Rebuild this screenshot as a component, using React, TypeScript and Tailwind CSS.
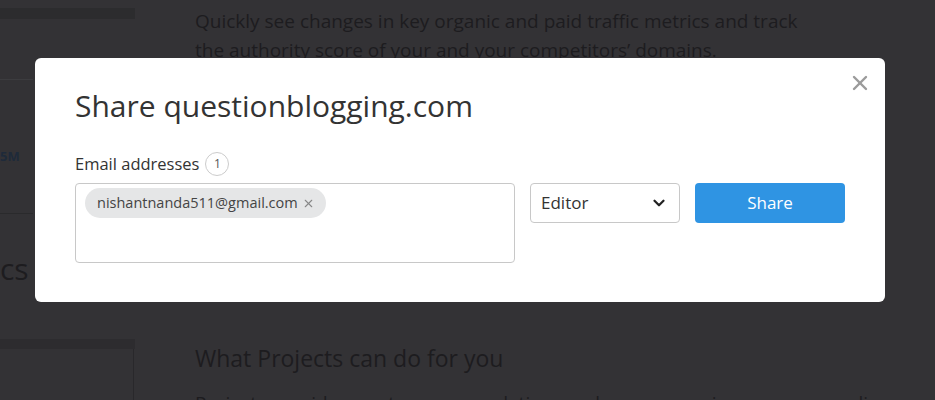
import { X, ChevronDown } from 'lucide-react'

const font = { fontFamily: '"Open Sans", "Noto Sans", sans-serif' }

function BackgroundPage() {
  return (
    <div className="flex h-full w-full text-[#1d1c1f]">
      <aside className="flex w-[135px] shrink-0 flex-col">
        <div className="mt-[8px] h-[13px] w-[135px] bg-[#2c2c2e]" />
        <div className="mt-[60px] h-[1px] w-[33px] bg-[#3c3c3f]" />
        <div className="flex border-r border-[#2b2b2d]">
          <div className="flex w-[33px] flex-col">
            <span className="mt-[70px] text-[13px] font-bold leading-none text-[#1e2a3a]">5M</span>
            <div className="mt-[50px] h-[1px] w-[33px] bg-[#2a2a2c]" />
            <span className="mt-[40px] text-[30px] font-medium leading-none">cs</span>
          </div>
        </div>
        <div className="mt-[55px] h-[12px] w-[135px] bg-[#2d2c2f]" />
        <div className="ml-[133px] h-[60px] w-[1px] bg-[#29282b]" />
      </aside>
      <main className="flex flex-col pl-[60px]">
        <p className="mt-[7px] w-[620px] text-[19px] leading-[29px]">
          Quickly see changes in key organic and paid traffic metrics and track the authority
          score of your and your competitors’ domains.
        </p>
        <h2 className="mt-[276px] text-[23px] font-medium">What Projects can do for you</h2>
        <p className="mt-[13px] text-[19px] leading-[29px]">
          Projects provide smart recommendations on how you can improve your online
        </p>
      </main>
    </div>
  )
}

function ShareModal() {
  return (
    <div className="absolute left-[35px] top-[58px] h-[244px] w-[850px] rounded-[6px] bg-white px-[40px] pt-[26px]">
      <button className="absolute right-[13px] top-[13px] text-[#9b9b9b]">
        <X size={24} strokeWidth={2.4} />
      </button>
      <h1 className="text-[30px] leading-[44px] text-[#333]">Share questionblogging.com</h1>
      <div className="mt-[24px] flex h-[24px] items-center gap-[6px] text-[16.5px] text-[#333]">
        <span>Email addresses</span>
        <span className="flex h-[24px] w-[24px] items-center justify-center rounded-full border border-[#ccc] text-[12px] text-[#555]">
          1
        </span>
      </div>
      <div className="mt-[7px] flex gap-[15px]">
        <div className="h-[80px] w-[440px] rounded-[4px] border border-[#c8c8c8] px-[9px] pt-[4px]">
          <div className="inline-flex h-[30px] items-center gap-[4px] rounded-full bg-[#e5e6e7] pl-[12px] pr-[11px] text-[14.5px] text-[#444]">
            <span>nishantnanda511@gmail.com</span>
            <X size={13} strokeWidth={2} className="text-[#888]" />
          </div>
        </div>
        <div className="flex h-[40px] w-[150px] items-center justify-between rounded-[4px] border border-[#c8c8c8] pl-[10px] pr-[11px] text-[17px] text-[#333]">
          <span>Editor</span>
          <ChevronDown size={18} strokeWidth={3} className="text-[#222]" />
        </div>
        <button className="h-[40px] w-[150px] rounded-[4px] bg-[#2f94e3] text-[17px] font-medium text-white">
          Share
        </button>
      </div>
    </div>
  )
}

export default function App() {
  return (
    <div className="relative h-[400px] w-[935px] overflow-hidden bg-[#333235]" style={font}>
      <BackgroundPage />
      <ShareModal />
    </div>
  )
}
